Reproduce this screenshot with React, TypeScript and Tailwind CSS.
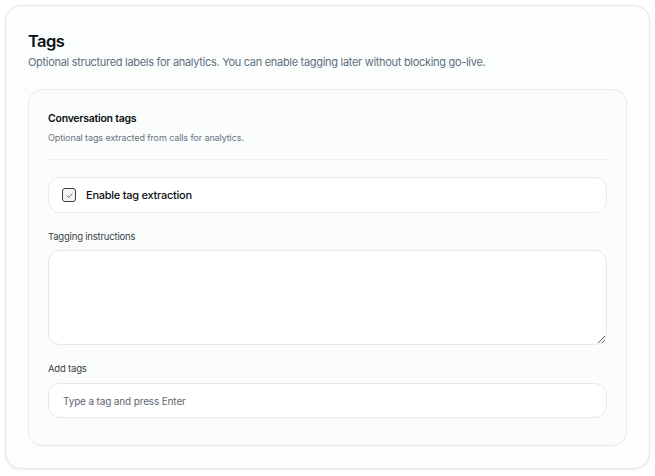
import React from "react";

export default function App() {
  return (
    <div className="min-h-[476px] w-[655px] bg-white p-[5px]" style={{ fontFamily: "Inter, 'Noto Sans', sans-serif" }}>
      <div className="h-[464px] rounded-[16px] border border-[#e5e7e9] bg-[#fcfdfd] px-[22px] pt-[25px] shadow-[0_1px_3px_rgba(0,0,0,0.08)]">
        <h2 className="text-[16.5px] font-semibold leading-[20px] tracking-[-0.6px] text-[#0b0f14]">Tags</h2>
        <p className="mt-[3px] text-[11px] leading-[16px] tracking-[-0.3px] text-[#5d7080]">
          Optional structured labels for analytics. You can enable tagging later without blocking go-live.
        </p>
        <div className="mt-[19px] rounded-[14px] border border-[#e8eaec] bg-[#fbfcfc] px-[19px] pb-[27px] pt-[21px]">
          <div className="text-[10.5px] font-semibold leading-[16px] tracking-[-0.25px] text-[#0b0f14]">Conversation tags</div>
          <div className="mt-[4px] text-[9px] leading-[14px] tracking-[-0.1px] text-[#6a737c]">
            Optional tags extracted from calls for analytics.
          </div>
          <div className="mt-[14px] h-px bg-[#eceef0]" />
          <label className="mt-[17px] flex h-[36px] items-center gap-[10px] rounded-[12px] border border-[#e8eaec] bg-white px-[13px]">
            <span className="flex h-[14px] w-[14px] items-center justify-center rounded-[3px] border-[1.5px] border-[#3a3f45] bg-[#f2f3f4]">
              <svg width="9" height="9" viewBox="0 0 10 10" fill="none">
                <path d="M2 5.2 L4.2 7.2 L8 3" stroke="#6b7178" strokeWidth="1" strokeLinecap="round" strokeLinejoin="round" />
              </svg>
            </span>
            <span className="text-[11px] font-medium tracking-[-0.25px] text-[#0b0f14]">Enable tag extraction</span>
          </label>
          <div className="mt-[17px] text-[9.5px] leading-[14px] tracking-[-0.2px] text-[#3a4047]">Tagging instructions</div>
          <textarea className="mt-[6px] block h-[95px] w-full resize-y rounded-[12px] border border-[#e5e7e9] bg-white px-3 py-2 text-[11px] outline-none" />
          <div className="mt-[17px] text-[9.5px] leading-[14px] tracking-[-0.2px] text-[#3a4047]">Add tags</div>
          <input
            className="mt-[7px] block h-[35px] w-full rounded-[12px] border border-[#e5e7e9] bg-white px-[14px] text-[10px] tracking-[-0.15px] text-[#0b0f14] outline-none placeholder:text-[#5d6670]"
            placeholder="Type a tag and press Enter"
          />
        </div>
      </div>
    </div>
  );
}
